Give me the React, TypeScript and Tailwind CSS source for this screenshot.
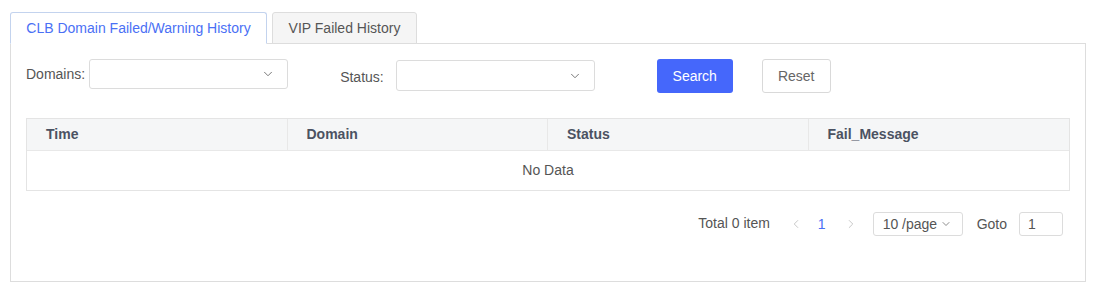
import React, { useState } from 'react';
import { ChevronDown, ChevronLeft, ChevronRight } from 'lucide-react';

const columns = ['Time', 'Domain', 'Status', 'Fail_Message'];

const SelectBox: React.FC<{ className?: string }> = ({ className }) => (
  <div
    className={`flex items-center justify-end rounded-[3px] border border-[#dcdcdc] bg-white pr-[12px] ${className ?? ''}`}
  >
    <ChevronDown className="h-[14px] w-[14px] text-[#666]" strokeWidth={1.5} />
  </div>
);

const App: React.FC = () => {
  const [tab, setTab] = useState(0);

  return (
    <div className="min-h-[290px] bg-white pl-[10px] pr-[12px] pt-[12px] font-['Liberation_Sans',Arial,sans-serif]">
      {/* Tabs */}
      <div className="relative z-10 -mb-px flex gap-[5px]">
        <button
          onClick={() => setTab(0)}
          className={`h-[32px] w-[257px] rounded-t-[3px] border text-[14px] ${
            tab === 0
              ? 'border-[#c3d3ee] border-b-white bg-white text-[#4a70f5]'
              : 'border-[#dddddd] bg-[#f5f5f5] text-[#555]'
          }`}
        >
          CLB Domain Failed/Warning History
        </button>
        <button
          onClick={() => setTab(1)}
          className={`h-[32px] w-[145px] rounded-t-[3px] border text-[14px] ${
            tab === 1
              ? 'border-[#c3d3ee] border-b-white bg-white text-[#4a70f5]'
              : 'border-[#dddddd] bg-[#f5f5f5] text-[#555]'
          }`}
        >
          VIP Failed History
        </button>
      </div>

      {/* Panel */}
      <div className="h-[239px] border border-[#dddddd] px-[15px] pt-[15px]">
        {/* Filters */}
        <div className="flex items-start text-[14px] text-[#555]">
          <span className="mr-[4px] mt-[5px]">Domains:</span>
          <SelectBox className="h-[30px] w-[199px]" />
          <span className="ml-[52px] mr-[12px] mt-[8px]">Status:</span>
          <SelectBox className="mt-[1px] h-[31px] w-[199px]" />
          <button className="ml-[62px] h-[34px] w-[76px] rounded-[3px] bg-[#4567fb] text-[14px] text-white">
            Search
          </button>
          <button className="ml-[29px] h-[34px] w-[69px] rounded-[3px] border border-[#d9d9d9] bg-white text-[14px] text-[#666]">
            Reset
          </button>
        </div>

        {/* Table */}
        <div className="mt-[25px] border border-[#e4e4e4]">
          <div className="grid h-[32px] grid-cols-4 bg-[#f5f6f7] border-b border-[#e8e8e8]">
            {columns.map((c, i) => (
              <div
                key={c}
                className={`flex items-center pl-[19px] text-[14px] font-bold text-[#4b5262] ${
                  i < 3 ? 'border-r border-[#e8e8e8]' : ''
                }`}
              >
                {c}
              </div>
            ))}
          </div>
          <div className="flex h-[39px] items-center justify-center text-[14px] text-[#555]">
            No Data
          </div>
        </div>

        {/* Pagination */}
        <div className="mt-[21px] flex items-center justify-end pr-[7px] text-[14px] text-[#555]">
          <span className="mb-[2px]">Total 0 item</span>
          <ChevronLeft className="ml-[19px] h-[14px] w-[14px] text-[#c0c0c0]" strokeWidth={1.5} />
          <span className="ml-[15px] text-[#4a70f5]">1</span>
          <ChevronRight className="ml-[18px] h-[14px] w-[14px] text-[#c0c0c0]" strokeWidth={1.5} />
          <div className="ml-[15px] flex h-[24px] w-[90px] items-center rounded-[3px] border border-[#dcdcdc] pl-[9px]">
            10 /page
            <ChevronDown className="ml-[3px] h-[12px] w-[12px] text-[#666]" strokeWidth={1.5} />
          </div>
          <span className="ml-[14px]">Goto</span>
          <div className="ml-[12px] flex h-[24px] w-[44px] items-center rounded-[3px] border border-[#dcdcdc] pl-[8px]">
            1
          </div>
        </div>
      </div>
    </div>
  );
};

export default App;
